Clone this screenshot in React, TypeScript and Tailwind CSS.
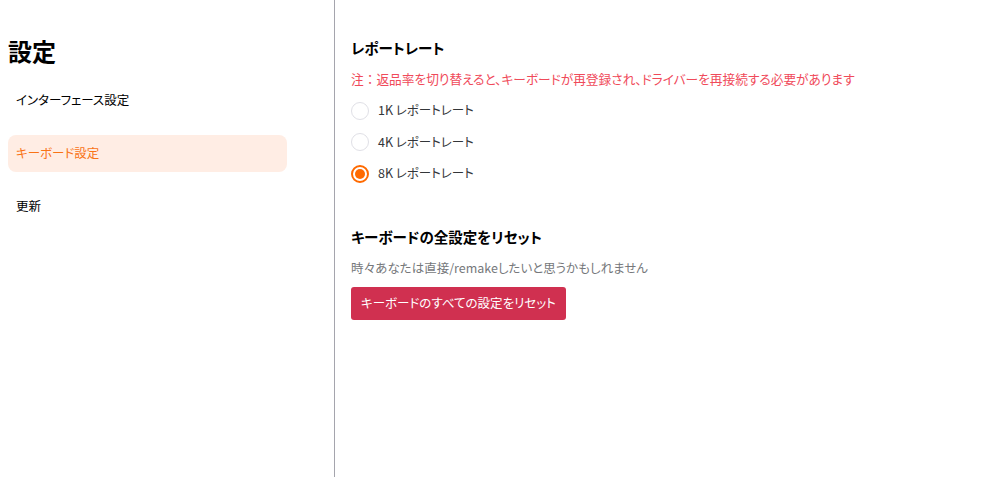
import React from "react";

export default function App() {
  const rates = ["1K", "4K", "8K"];
  const selected = "8K";
  return (
    <div className="flex h-[477px] w-[996px] bg-white text-[#1f2225] [font-feature-settings:'palt']" style={{ fontFamily: '"Noto Sans CJK JP", "Noto Sans", sans-serif' }}>
      <aside className="flex w-[335px] shrink-0 flex-col border-r border-[#a5a5ad] pl-2 pr-[47px] pt-[36px]">
        <h1 className="text-[24px] font-bold leading-[30px] text-black">設定</h1>
        <nav className="mt-[16px] flex flex-col gap-[16px] text-[12.5px]">
          <div className="flex h-[37px] items-center rounded-lg px-2 text-black">インターフェース設定</div>
          <div className="flex h-[37px] items-center rounded-lg bg-[#ffede4] px-2 text-[#f97316]">キーボード設定</div>
          <div className="flex h-[37px] items-center rounded-lg px-2 text-black">更新</div>
        </nav>
      </aside>
      <main className="flex flex-col pl-4 pt-[36px]">
        <h2 className="text-[14.5px] font-bold leading-[24px] text-black">レポートレート</h2>
        <p className="mt-[9px] text-[12.7px] leading-[20px] text-[#f04a5a]">
          注<span className="[font-feature-settings:normal]">：</span>返品率を切り替えると、キーボードが再登録され、ドライバーを再接続する必要があります
        </p>
        <div className="mt-[6px] flex flex-col">
          {rates.map((r) => (
            <label key={r} className="flex h-[31.5px] items-center gap-[9px] text-[12.5px] text-[#333639]">
              {r === selected ? (
                <span className="flex h-[18px] w-[18px] items-center justify-center rounded-full border-2 border-[#ff6a00]">
                  <span className="h-[10px] w-[10px] rounded-full bg-[#ff6a00]" />
                </span>
              ) : (
                <span className="h-[18px] w-[18px] rounded-full border border-[#e0e0e6]" />
              )}
              <span>{r} レポートレート</span>
            </label>
          ))}
        </div>
        <h2 className="mt-[35px] text-[14.5px] font-bold leading-[24px] text-black">キーボードの全設定をリセット</h2>
        <p className="mt-[9px] text-[12.5px] leading-[20px] text-[#76787b]">時々あなたは直接/remakeしたいと思うかもしれません</p>
        <div className="mt-[9px]">
          <button className="h-[33px] rounded-[3px] bg-[#d03050] px-[10px] text-[12.5px] text-white">キーボードのすべての設定をリセット</button>
        </div>
      </main>
    </div>
  );
}
